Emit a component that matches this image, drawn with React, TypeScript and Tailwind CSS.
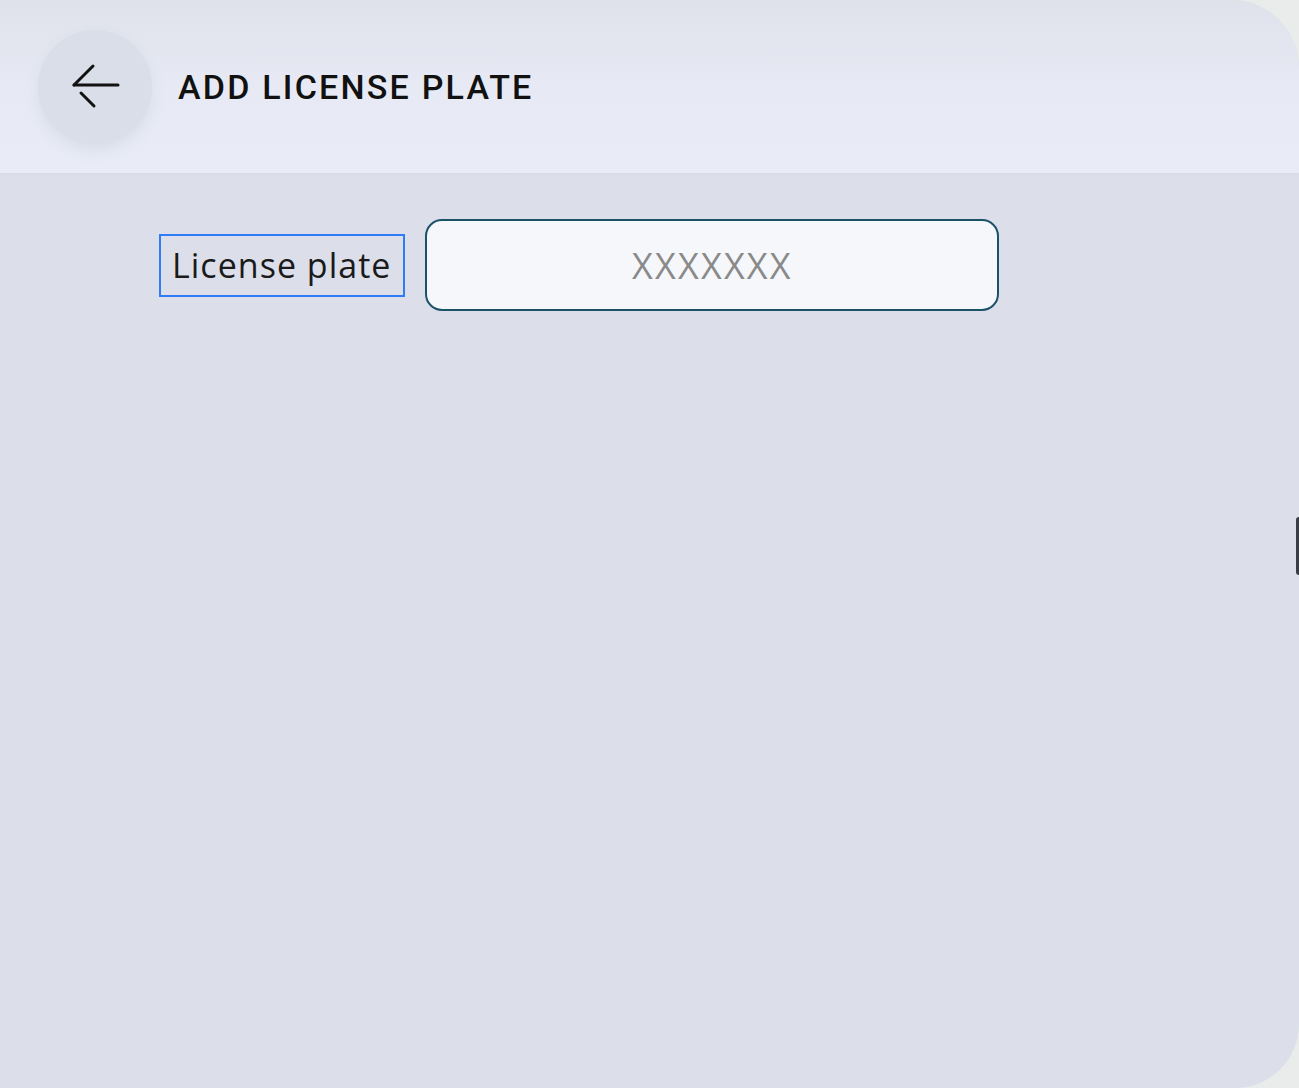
import React from "react";

export default function App() {
  return (
    <div className="w-[1299px] h-[1088px] bg-[#e9ecea] overflow-hidden">
      <div className="relative w-full h-full rounded-tr-[68px] rounded-br-[64px] overflow-hidden bg-[#dcdfea] flex flex-col">
        <header className="h-[173px] shrink-0 flex items-center bg-gradient-to-b from-[#dfe2eb] via-[#e7eaf4] to-[#e9ecf6] shadow-[0_1px_2px_rgba(0,0,0,0.03)]">
          <button className="ml-[38px] w-[114px] h-[114px] rounded-full bg-[#dadee8] flex items-center justify-center shadow-[0_6px_14px_rgba(180,188,205,0.3)]">
            <svg width="60" height="60" viewBox="0 0 60 60" fill="none" stroke="#111" strokeWidth="3" strokeLinecap="round">
              <line x1="9" y1="28" x2="53" y2="28" />
              <line x1="9" y1="28" x2="28" y2="9" />
              <line x1="16" y1="36" x2="29" y2="49" />
            </svg>
          </button>
          <h1 className="ml-[26px] text-[34px] font-medium tracking-[0.065em] text-[#111] font-['Roboto',sans-serif] leading-none">
            ADD LICENSE PLATE
          </h1>
        </header>
        <main className="flex-1 pt-[46px] pl-[159px]">
          <div className="flex items-center gap-[20px]">
            <label className="h-[63px] pl-[11px] pr-[12px] flex items-center border-2 border-[#2f7cf6] text-[34px] tracking-[0.03em] text-[#1a1a1a] font-['Open_Sans',sans-serif]">
              License plate
            </label>
            <input
              placeholder="XXXXXXX"
              className="w-[574px] h-[92px] rounded-[17px] border-[2.5px] border-[#1c5269] bg-[#f5f7fa] text-center text-[36px] tracking-[0.06em] placeholder:text-[#8a8a8a] font-['Open_Sans',sans-serif] outline-none"
            />
          </div>
        </main>
        <div className="absolute right-0 top-[517px] w-[3px] h-[58px] bg-[#3a3d45] rounded-l-sm" />
      </div>
    </div>
  );
}
